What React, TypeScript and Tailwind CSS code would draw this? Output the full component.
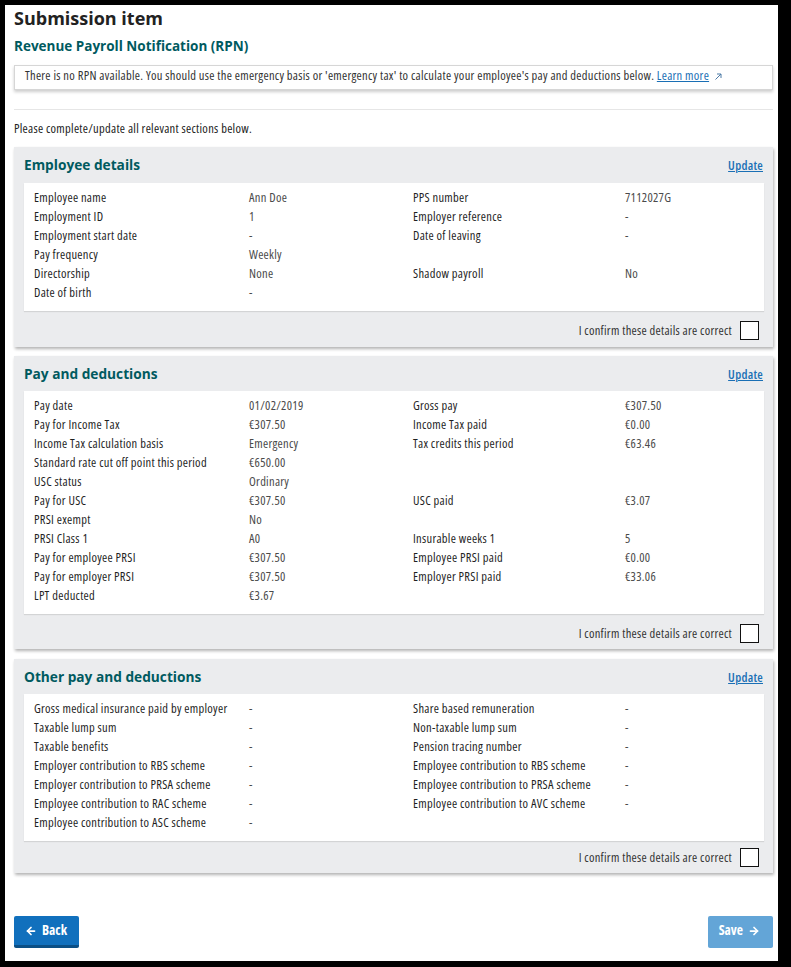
import { ArrowLeft, ArrowRight } from 'lucide-react';

//--------------------------------------------------------------------//
// Types

type Row = [string, string, string?, string?];

type SectionProps = {
  title: string;
  rows: Row[];
  head: string;
  foot: string;
  className?: string;
};

//--------------------------------------------------------------------//
// Constants

const employee: Row[] = [
  ['Employee name', 'Ann Doe', 'PPS number', '7112027G'],
  ['Employment ID', '1', 'Employer reference', '-'],
  ['Employment start date', '-', 'Date of leaving', '-'],
  ['Pay frequency', 'Weekly'],
  ['Directorship', 'None', 'Shadow payroll', 'No'],
  ['Date of birth', '-']
];

const pay: Row[] = [
  ['Pay date', '01/02/2019', 'Gross pay', '€307.50'],
  ['Pay for Income Tax', '€307.50', 'Income Tax paid', '€0.00'],
  ['Income Tax calculation basis', 'Emergency', 'Tax credits this period', '€63.46'],
  ['Standard rate cut off point this period', '€650.00'],
  ['USC status', 'Ordinary'],
  ['Pay for USC', '€307.50', 'USC paid', '€3.07'],
  ['PRSI exempt', 'No'],
  ['PRSI Class 1', 'A0', 'Insurable weeks 1', '5'],
  ['Pay for employee PRSI', '€307.50', 'Employee PRSI paid', '€0.00'],
  ['Pay for employer PRSI', '€307.50', 'Employer PRSI paid', '€33.06'],
  ['LPT deducted', '€3.67']
];

const other: Row[] = [
  ['Gross medical insurance paid by employer', '-', 'Share based remuneration', '-'],
  ['Taxable lump sum', '-', 'Non-taxable lump sum', '-'],
  ['Taxable benefits', '-', 'Pension tracing number', '-'],
  ['Employer contribution to RBS scheme', '-', 'Employee contribution to RBS scheme', '-'],
  ['Employer contribution to PRSA scheme', '-', 'Employee contribution to PRSA scheme', '-'],
  ['Employee contribution to RAC scheme', '-', 'Employee contribution to AVC scheme', '-'],
  ['Employee contribution to ASC scheme', '-']
];

//--------------------------------------------------------------------//
// Components

/**
 * Grey card with a details grid and a confirm box
 */
function Section({ title, rows, head, foot, className = '' }: SectionProps) {
  return (
    <section className={'bg-[#ebecee] shadow-[1px_2px_3px_rgba(0,0,0,0.3)] ' + className}>
      <header className={'flex items-baseline justify-between pl-[10px] pr-[10px] ' + head}>
        <h3 className={
          "font-['Open_Sans',sans-serif] [font-stretch:100%] tracking-normal font-bold "
          + 'text-[13.7px] leading-[20px] text-[#005a5f]'
        }>
          {title}
        </h3>
        <a href="#" className="font-semibold text-[#1a6fb5] underline">
          Update
        </a>
      </header>
      <div className={
        'ml-[10px] mr-[9px] bg-white shadow-[0_1px_1px_rgba(0,0,0,0.1)] '
        + 'pt-[5px] pb-[9px] pl-[10px] grid grid-cols-[215px_164px_212px_1fr]'
      }>
        {rows.map((row, i) => (
          <div key={i} className="contents">
            <span className="h-[19px] whitespace-nowrap font-medium text-[#1f1f1f]">{row[0]}</span>
            <span className="h-[19px] whitespace-nowrap text-[#4a4a4a]">{row[1]}</span>
            <span className="h-[19px] whitespace-nowrap font-medium text-[#1f1f1f]">{row[2] || ''}</span>
            <span className="h-[19px] whitespace-nowrap text-[#4a4a4a]">{row[3] || ''}</span>
          </div>
        ))}
      </div>
      <div className={'flex items-center justify-end gap-[8px] pr-[14px] ' + foot}>
        <span className="text-[#333]">I confirm these details are correct</span>
        <span className="w-[19px] h-[19px] border-[1.5px] border-[#111] bg-white" />
      </div>
    </section>
  );
}

/**
 * Main page component
 */
export default function App() {
  return (
    <div className={
      'w-[791px] h-[967px] bg-black pt-[5px] pl-[5px] text-[12.5px] leading-[19px] text-[#222] '
      + "font-['Open_Sans',sans-serif] [font-stretch:75%] tracking-[0.28px]"
    }>
      <div className="w-[773px] h-[956px] bg-white pl-[9px] pr-[5px] pt-[1px]">
        <h1 className={
          "font-['Open_Sans',sans-serif] [font-stretch:100%] tracking-normal font-bold "
          + 'text-[18px] leading-[24px] text-[#222]'
        }>
          Submission item
        </h1>
        <h2 className={
          "mt-[6px] font-['Open_Sans',sans-serif] [font-stretch:100%] tracking-normal font-bold "
          + 'text-[13.5px] leading-[20px] text-[#005a5f]'
        }>
          Revenue Payroll Notification (RPN)
        </h2>
        <div className={
          'mt-[9px] h-[25px] border border-[#d6d6d6] shadow-[0_2px_3px_rgba(0,0,0,0.2)] '
          + 'pl-[10px] whitespace-nowrap text-[#333]'
        }>
          There is no RPN available. You should use the emergency basis or 'emergency tax' to
          calculate your employee's pay and deductions below.{' '}
          <a href="#" className="text-[#1a6fb5] underline">Learn more</a>
          <svg width="7" height="7" viewBox="0 0 7 7" className="inline-block ml-[6px] align-baseline">
            <path d="M0.5 6.5 L6 1 M2 1 H6 V5" stroke="#4d7aa6" strokeWidth="1" fill="none" />
          </svg>
        </div>
        <div className="mt-[19px] h-px bg-[#e6e6e6]" />
        <p className="mt-[9px]">Please complete/update all relevant sections below.</p>
        <Section
          title="Employee details"
          rows={employee}
          head="pt-[8px] pb-[8px]"
          foot="pt-[10px] pb-[7px]"
          className="mt-[9px]"
        />
        <Section
          title="Pay and deductions"
          rows={pay}
          head="pt-[8px] pb-[7px]"
          foot="pt-[10px] pb-[6px]"
          className="mt-[9px]"
        />
        <Section
          title="Other pay and deductions"
          rows={other}
          head="pt-[8px] pb-[7px]"
          foot="pt-[7px] pb-[6px]"
          className="mt-[10px]"
        />
        <div className="mt-[43px] flex justify-between">
          <button className={
            'h-[32px] pl-[11px] pr-[12px] flex items-center gap-[5px] rounded-[2px] tracking-normal '
            + 'bg-[#1170bd] border-b-[3px] border-[#0b4f85] text-white font-bold text-[13.5px]'
          }>
            <ArrowLeft size={12} strokeWidth={3.5} />
            Back
          </button>
          <button className={
            'h-[32px] pl-[11px] pr-[13px] flex items-center gap-[5px] rounded-[2px] tracking-normal '
            + 'bg-[#63a5d7] border-b-[3px] border-[#63a5d7] text-white font-bold text-[13.5px]'
          }>
            Save
            <ArrowRight size={12} strokeWidth={3.5} />
          </button>
        </div>
      </div>
    </div>
  );
}
